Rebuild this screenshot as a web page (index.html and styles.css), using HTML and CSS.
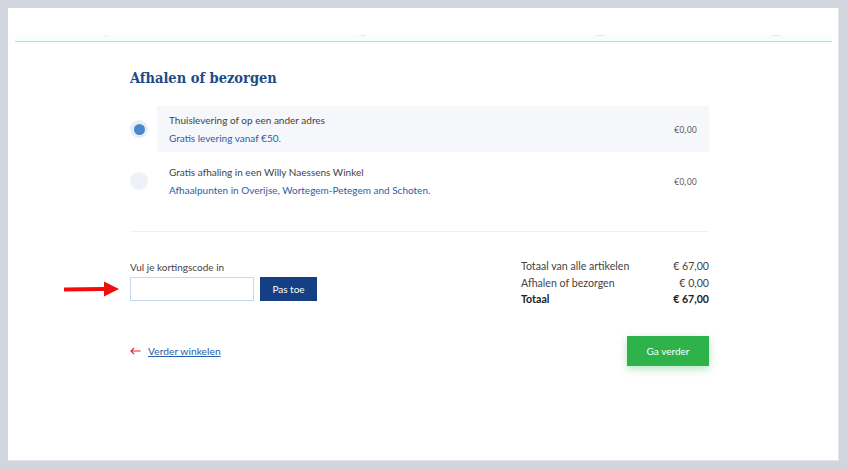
FILE: index.html
```html
<!DOCTYPE html>
<html lang="nl">
<head>
    <meta charset="UTF-8">
    <meta name="viewport" content="width=device-width, initial-scale=1.0">
    <title>Afhalen of bezorgen</title>
    <link rel="stylesheet" href="styles.css">
</head>
<body>
    <div class="page">
        <div class="steps">
            <span class="tick t1"></span>
            <span class="tick t2"></span>
            <span class="tick t3"></span>
            <span class="tick t4"></span>
        </div>

        <div class="content">
            <h1>Afhalen of bezorgen</h1>

            <div class="options">
                <div class="option">
                    <span class="radio checked"></span>
                    <div class="option-box selected">
                        <div class="option-text">
                            <div class="option-title">Thuislevering of op een ander adres</div>
                            <div class="option-sub">Gratis levering vanaf €50.</div>
                        </div>
                        <div class="price">€0,00</div>
                    </div>
                </div>
                <div class="option">
                    <span class="radio"></span>
                    <div class="option-box">
                        <div class="option-text">
                            <div class="option-title">Gratis afhaling in een Willy Naessens Winkel</div>
                            <div class="option-sub">Afhaalpunten in Overijse, Wortegem-Petegem and Schoten.</div>
                        </div>
                        <div class="price">€0,00</div>
                    </div>
                </div>
            </div>

            <div class="summary">
                <div class="coupon">
                    <label for="coupon">Vul je kortingscode in</label>
                    <div class="coupon-row">
                        <svg class="pointer" width="56" height="16" viewBox="0 0 56 16">
                            <path d="M0 6.5 L40 6 L40 0.5 L55 8 L40 15.5 L40 10 L0 10.5 Z" fill="#f20d0d"/>
                        </svg>
                        <input type="text" id="coupon">
                        <button class="btn-apply">Pas toe</button>
                    </div>
                </div>
                <table class="totals">
                    <tr><td>Totaal van alle artikelen</td><td>€ 67,00</td></tr>
                    <tr><td>Afhalen of bezorgen</td><td>€ 0,00</td></tr>
                    <tr class="total"><td>Totaal</td><td>€ 67,00</td></tr>
                </table>
            </div>

            <div class="actions">
                <a href="#" class="back">
                    <svg width="11" height="8" viewBox="0 0 11 8">
                        <path d="M10.5 4 H1 M4.2 0.8 L1 4 L4.2 7.2" fill="none" stroke="#e8262a" stroke-width="1.2"/>
                    </svg>
                    <span>Verder winkelen</span>
                </a>
                <button class="btn-next">Ga verder</button>
            </div>
        </div>
    </div>
</body>
</html>
```

FILE: styles.css
```css
* {
    margin: 0;
    padding: 0;
    box-sizing: border-box;
}

body {
    background-color: #d1d5de;
    font-family: Lato, 'Open Sans', sans-serif;
    color: #444;
}

.page {
    margin: 8px;
    width: 831px;
    height: 453px;
    background-color: #fff;
    border-right: 1px solid #e6e8ee;
    border-bottom: 1px solid #e6e8ee;
}

.steps {
    position: relative;
    margin: 0 6px 0 7px;
    padding-top: 27px;
}

.steps::before {
    content: "";
    display: block;
    height: 6px;
    background-color: #f3feff;
    border-bottom: 1px solid #c9d5d8;
}

.tick {
    position: absolute;
    top: 27px;
    height: 1px;
    background-color: #dfe7f4;
}

.t1 { left: 90px; width: 2px; }
.t2 { left: 344px; width: 7px; }
.t3 { left: 582px; width: 7px; background-color: #f0dede; }
.t4 { left: 758px; width: 6px; background-color: #f0dede; }

.content {
    width: 579px;
    margin-left: 122px;
}

h1 {
    font-family: 'DejaVu Serif Condensed', 'DejaVu Serif', serif;
    font-stretch: condensed;
    font-size: 14.5px;
    font-weight: bold;
    color: #1e4b88;
    margin-top: 27px;
    height: 37px;
}

.options {
    padding-bottom: 21px;
    border-bottom: 1px solid #eef0f4;
}

.option {
    display: flex;
    align-items: center;
    margin-bottom: 6px;
}

.radio {
    width: 18px;
    height: 18px;
    border-radius: 50%;
    background-color: #eef1f8;
    margin-right: 9px;
    display: flex;
    align-items: center;
    justify-content: center;
}

.radio.checked {
    background-color: #e6eef9;
}

.radio.checked::after {
    content: "";
    width: 11px;
    height: 11px;
    border-radius: 50%;
    background-color: #4a88cc;
}

.option-box {
    flex: 1;
    height: 46px;
    display: flex;
    align-items: center;
    justify-content: space-between;
    padding: 0 12px;
}

.option-box.selected {
    background-color: #f5f7fb;
}

.option-title {
    font-size: 10px;
    color: #444;
    margin-bottom: 6px;
}

.option-sub {
    font-size: 10px;
    color: #2a5ea8;
}

.price {
    font-family: 'Open Sans', sans-serif;
    font-size: 9px;
    color: #555;
}

.summary {
    display: flex;
    justify-content: space-between;
    padding-top: 29px;
}

.coupon label {
    display: block;
    font-size: 10px;
    color: #444;
    margin-bottom: 4px;
}

.coupon-row {
    display: flex;
    align-items: center;
    position: relative;
}

.pointer {
    position: absolute;
    left: -66px;
    top: 4px;
}

.coupon-row input {
    width: 124px;
    height: 24px;
    border: 1px solid #c8d8ee;
    margin-right: 6px;
}

.btn-apply {
    width: 57px;
    height: 24px;
    background-color: #143f82;
    color: #fff;
    border: none;
    font-family: Lato, sans-serif;
    font-size: 10px;
}

.totals {
    border-collapse: collapse;
    width: 188px;
    margin-top: -3px;
    font-size: 10.6px;
    color: #444;
}

.totals td {
    height: 16.5px;
    padding: 0;
}

.totals td:last-child {
    text-align: right;
}

.totals .total td {
    font-weight: bold;
    color: #222;
}

.actions {
    display: flex;
    justify-content: space-between;
    align-items: center;
    margin-top: 28px;
}

.back {
    display: flex;
    align-items: center;
    gap: 7px;
    font-size: 10.3px;
    color: #2a5ea8;
}

.btn-next {
    width: 82px;
    height: 30px;
    background-color: #2db34a;
    color: #fff;
    border: none;
    font-family: Lato, sans-serif;
    font-size: 10px;
    box-shadow: 0 3px 8px rgba(45, 179, 74, 0.35);
}
```
